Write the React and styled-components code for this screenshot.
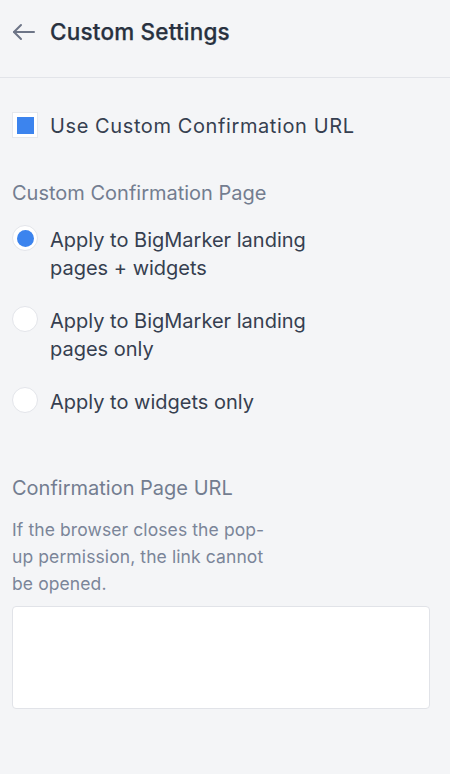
import React from "react";
import styled, { createGlobalStyle } from "styled-components";

const Global = createGlobalStyle`
  html, body { margin: 0; padding: 0; background: #f4f5f7; }
  body { font-family: Inter, "Noto Sans", sans-serif; -webkit-font-smoothing: antialiased; }
  * { box-sizing: border-box; }
`;

const Page = styled.div`
  width: 450px;
  min-height: 774px;
  background: #f4f5f7;
`;

const Header = styled.header`
  height: 78px;
  padding: 18px 12px 0;
  display: flex;
  align-items: flex-start;
  gap: 14px;
  border-bottom: 1px solid #e2e4e9;
`;

const BackButton = styled.button`
  width: 24px;
  height: 28px;
  padding: 0;
  border: 0;
  background: none;
  display: flex;
  align-items: center;
  justify-content: center;
  color: #6d7587;
  cursor: pointer;
`;

const Title = styled.h1`
  margin: 0;
  font-size: 22.5px;
  line-height: 28px;
  font-weight: 500;
  color: #28313f;
  letter-spacing: 0.2px;
  -webkit-text-stroke: 0.25px #28313f;
`;

const Content = styled.main`
  padding: 34px 20px 40px 12px;
  display: flex;
  flex-direction: column;
`;

const OptionRow = styled.label`
  display: flex;
  align-items: flex-start;
  gap: 12px;
  font-size: 20px;
  line-height: 28px;
  color: #363f50;
  letter-spacing: ${(p) => (p.$wide ? "0.6px" : "0")};
  cursor: pointer;
`;

const CheckBox = styled.span`
  flex: none;
  width: 26px;
  height: 26px;
  background: #fff;
  border: 1px solid #e6e8ec;
  display: flex;
  align-items: center;
  justify-content: center;
  &::after {
    content: "";
    width: 17px;
    height: 17px;
    background: ${(p) => (p.$checked ? "#3c84ee" : "transparent")};
  }
`;

const Radio = styled.span`
  flex: none;
  width: 26px;
  height: 26px;
  margin-top: -1px;
  border-radius: 50%;
  background: #fff;
  border: 1px solid #e3e5ea;
  display: flex;
  align-items: center;
  justify-content: center;
  &::after {
    content: "";
    width: 17px;
    height: 17px;
    border-radius: 50%;
    background: ${(p) => (p.$checked ? "#3c84ee" : "transparent")};
  }
`;

const SectionLabel = styled.div`
  font-size: 20px;
  line-height: 28px;
  color: #737d90;
  margin-top: ${(p) => p.$top}px;
`;

const RadioList = styled.div`
  margin-top: 19px;
  display: flex;
  flex-direction: column;
  gap: 25px;
`;

const Help = styled.p`
  margin: 14px 0 0;
  font-size: 17.5px;
  line-height: 27px;
  color: #7b8599;
  letter-spacing: 0.1px;
`;

const UrlBox = styled.textarea`
  margin-top: 9px;
  width: 100%;
  height: 103px;
  resize: none;
  background: #fff;
  border: 1px solid #e1e3e8;
  border-radius: 4px;
  font: inherit;
  outline: none;
`;

const options = [
  { id: 1, label: ["Apply to BigMarker landing", "pages + widgets"], checked: true },
  { id: 2, label: ["Apply to BigMarker landing", "pages only"], checked: false },
  { id: 3, label: ["Apply to widgets only"], checked: false },
];

export default function App() {
  return (
    <Page>
      <Global />
      <Header>
        <BackButton aria-label="Back">
          <svg width="24" height="24" viewBox="0 0 24 24" fill="none" stroke="currentColor" strokeWidth="2" strokeLinecap="round" strokeLinejoin="round">
            <path d="M22 12H2" />
            <path d="M9 5l-7 7 7 7" />
          </svg>
        </BackButton>
        <Title>Custom Settings</Title>
      </Header>
      <Content>
        <OptionRow $wide>
          <CheckBox $checked />
          <span>Use Custom Confirmation URL</span>
        </OptionRow>
        <SectionLabel $top={39}>Custom Confirmation Page</SectionLabel>
        <RadioList>
          {options.map((o) => (
            <OptionRow key={o.id}>
              <Radio $checked={o.checked} />
              <span>
                {o.label.map((l, i) => (
                  <React.Fragment key={i}>
                    {i > 0 && <br />}
                    {l}
                  </React.Fragment>
                ))}
              </span>
            </OptionRow>
          ))}
        </RadioList>
        <SectionLabel $top={58}>Confirmation Page URL</SectionLabel>
        <Help>
          If the browser closes the pop-
          <br />
          up permission, the link cannot
          <br />
          be opened.
        </Help>
        <UrlBox />
      </Content>
    </Page>
  );
}
